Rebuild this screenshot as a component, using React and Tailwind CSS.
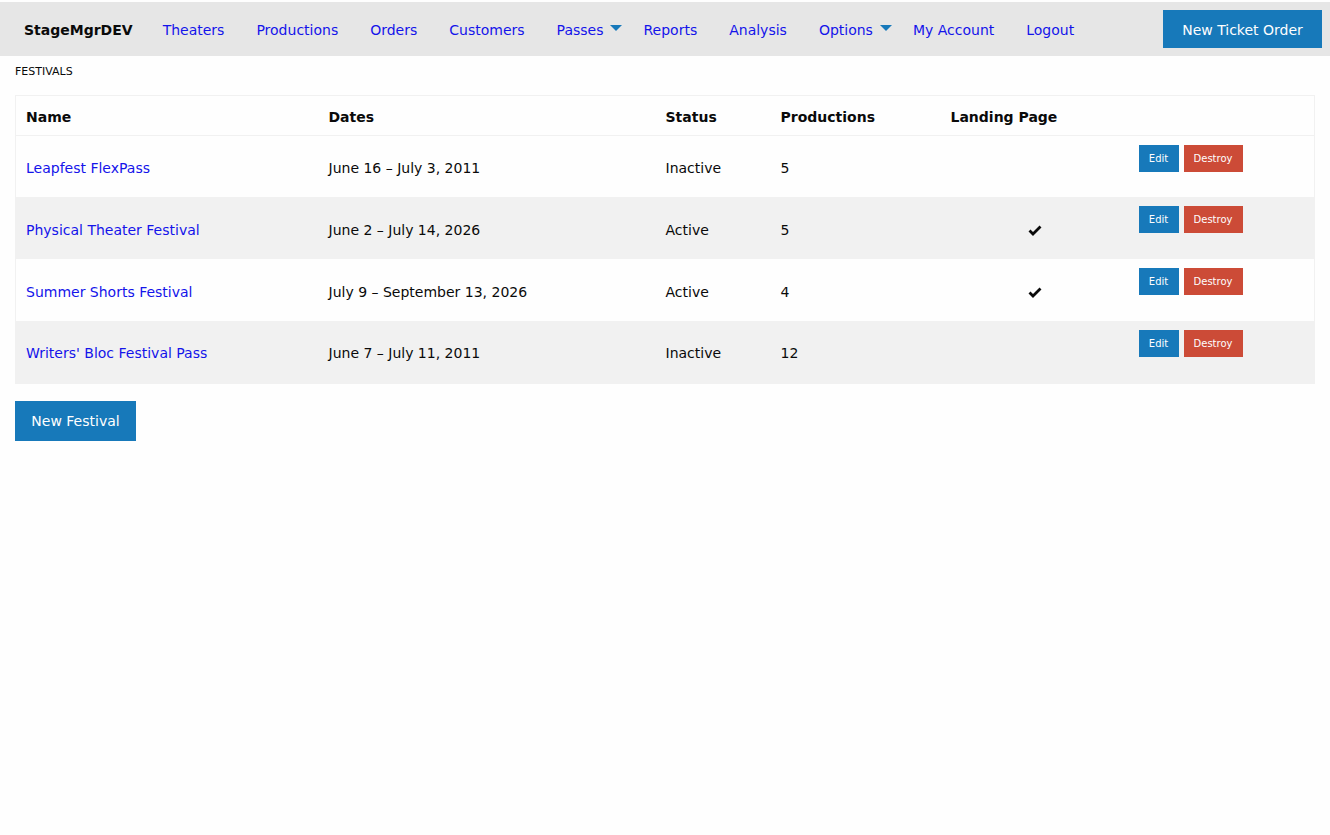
import React from "react";

const NAV = [
  { label: "Theaters" },
  { label: "Productions" },
  { label: "Orders" },
  { label: "Customers" },
  { label: "Passes", menu: true },
  { label: "Reports" },
  { label: "Analysis" },
  { label: "Options", menu: true },
  { label: "My Account" },
  { label: "Logout" },
];

const FESTIVALS = [
  { name: "Leapfest FlexPass", dates: "June 16 – July 3, 2011", status: "Inactive", productions: 5, landing: false },
  { name: "Physical Theater Festival", dates: "June 2 – July 14, 2026", status: "Active", productions: 5, landing: true },
  { name: "Summer Shorts Festival", dates: "July 9 – September 13, 2026", status: "Active", productions: 4, landing: true },
  { name: "Writers' Bloc Festival Pass", dates: "June 7 – July 11, 2011", status: "Inactive", productions: 12, landing: false },
];

function Caret() {
  return (
    <span className="ml-[7px] inline-block w-0 h-0 border-x-[6px] border-x-transparent border-t-[6px] border-t-[#1779ba] -translate-y-[3px]" />
  );
}

function Check() {
  return (
    <svg width="14" height="11" viewBox="0 0 14 11" className="inline-block">
      <path d="M1.5 5.5 L5 9 L12.5 1.5" fill="none" stroke="#0a0a0a" strokeWidth="2.8" />
    </svg>
  );
}

export default function App() {
  return (
    <div className="min-h-[835px] bg-[#fefefe] text-[#0a0a0a] font-['DejaVu_Sans',Verdana,sans-serif] pt-[2px]">
      <nav className="h-[54px] bg-[#e6e6e6] flex items-center pl-[24px] pr-[8px]">
        <span className="text-[14px] font-bold mr-[30px] pt-[3px]">StageMgrDEV</span>
        <ul className="flex items-center pt-[3px]">
          {NAV.map((n) => (
            <li key={n.label} className={`flex items-center ${n.menu ? "mr-[21px]" : "mr-[32px]"}`}>
              <a href="#" className="text-[14px] text-[#1414ea]">{n.label}</a>
              {n.menu && <Caret />}
            </li>
          ))}
        </ul>
        <button className="ml-auto h-[38px] w-[159px] bg-[#1779ba] text-[#fefefe] text-[14px] pt-[2px]">
          New Ticket Order
        </button>
      </nav>

      <div className="px-[15px]">
        <p className="text-[11px] mt-[8px] mb-[14px]">FESTIVALS</p>

        <table className="w-full table-fixed border border-[#f1f1f1] border-collapse text-[14px]">
          <thead>
            <tr className="h-[40px] border-b border-[#f1f1f1] text-left">
              <th className="w-[303px] px-[10px] pt-[4px] font-bold">Name</th>
              <th className="w-[337px] px-[10px] pt-[4px] font-bold">Dates</th>
              <th className="w-[115px] px-[10px] pt-[4px] font-bold">Status</th>
              <th className="w-[170px] px-[10px] pt-[4px] font-bold">Productions</th>
              <th className="w-[188px] px-[10px] pt-[4px] font-bold">Landing Page</th>
              <th className="px-[10px]"></th>
            </tr>
          </thead>
          <tbody>
            {FESTIVALS.map((f, i) => (
              <tr key={f.name} className={`h-[62px] ${i % 2 ? "bg-[#f1f1f1]" : "bg-[#fefefe]"}`}>
                <td className="px-[10px] pt-[4px]">
                  <a href="#" className="text-[#1414ea]">{f.name}</a>
                </td>
                <td className="px-[10px] pt-[4px]">{f.dates}</td>
                <td className="px-[10px] pt-[4px]">{f.status}</td>
                <td className="px-[10px] pt-[4px]">{f.productions}</td>
                <td className="px-[10px] pt-[4px] text-center">{f.landing ? <Check /> : ""}</td>
                <td className="px-[10px] align-top pt-[9px]">
                  <div className="flex gap-[5px]">
                    <button className="h-[27px] w-[40px] bg-[#1779ba] text-[#fefefe] text-[10px]">Edit</button>
                    <button className="h-[27px] w-[59px] bg-[#cc4b37] text-[#fefefe] text-[10px]">Destroy</button>
                  </div>
                </td>
              </tr>
            ))}
          </tbody>
        </table>

        <button className="mt-[17px] h-[40px] w-[121px] bg-[#1779ba] text-[#fefefe] text-[14px] pt-[2px]">
          New Festival
        </button>
      </div>
    </div>
  );
}
